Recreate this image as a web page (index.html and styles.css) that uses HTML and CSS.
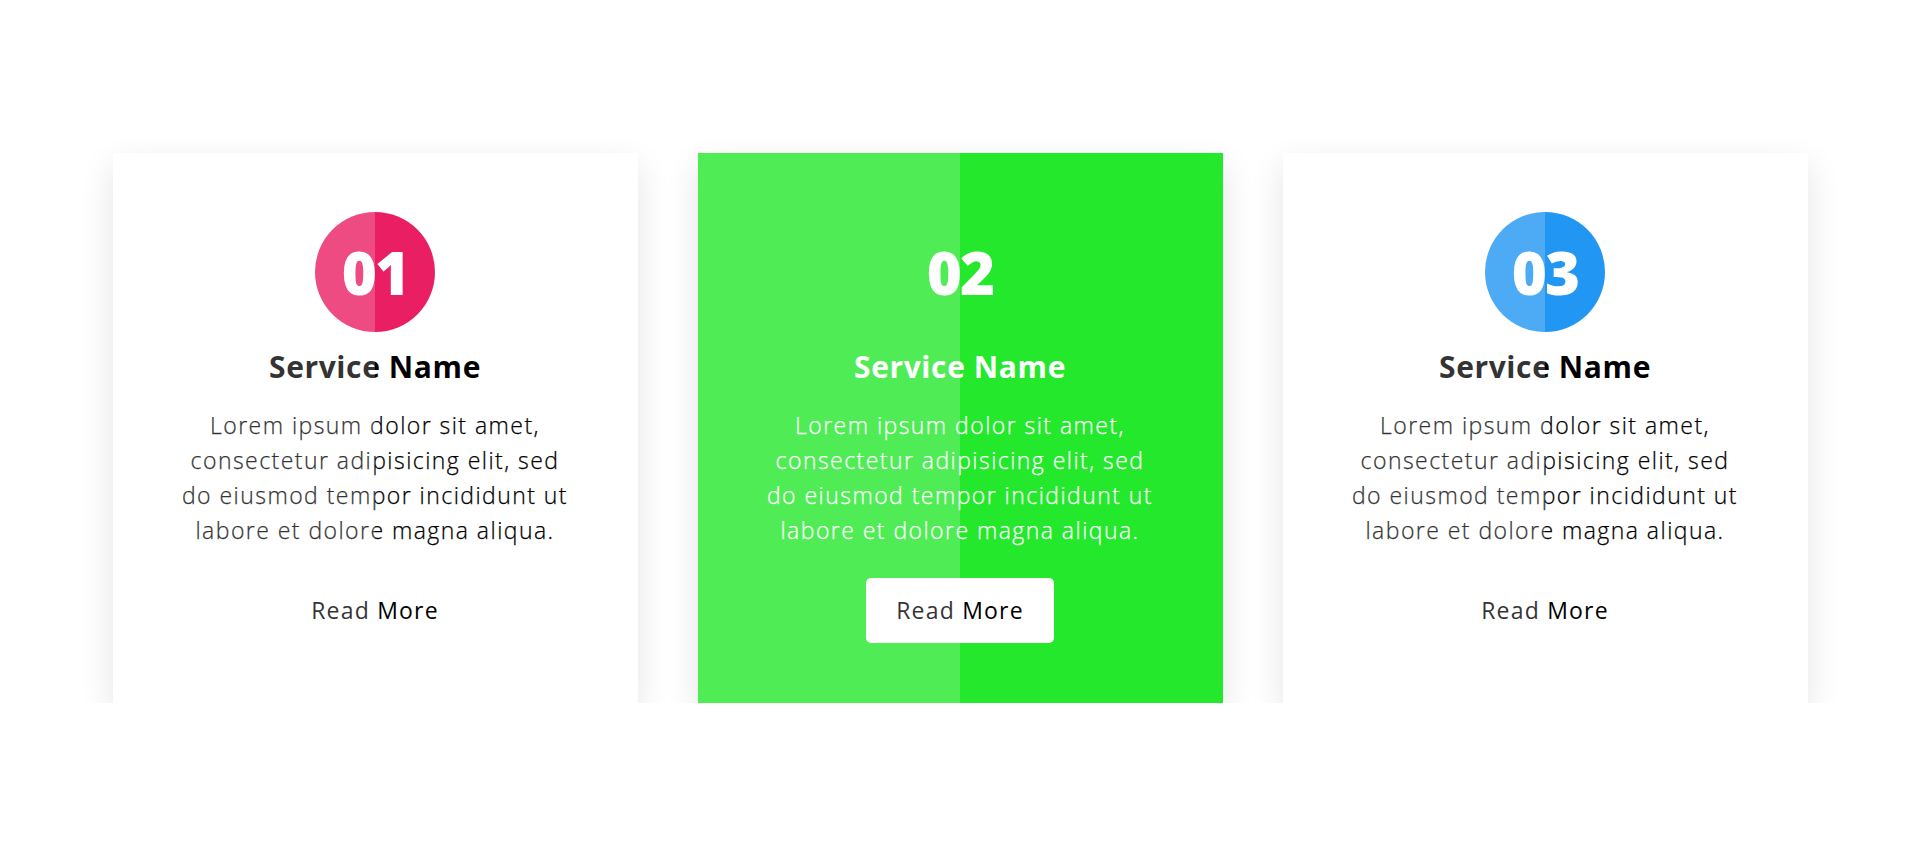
FILE: index.html
```html
<!DOCTYPE html>
<html lang="en">
<head>
<meta charset="utf-8">
<title>Services</title>
<link rel="stylesheet" href="styles.css">
</head>
<body>
<section class="services">
  <div class="card card-pink">
    <div class="num">01</div>
    <h3 class="title">Service Name</h3>
    <p class="text">Lorem ipsum dolor sit amet,<br>consectetur adipisicing elit, sed<br>do eiusmod tempor incididunt ut<br>labore et dolore magna aliqua.</p>
    <a class="more" href="#">Read More</a>
  </div>
  <div class="card card-green active">
    <div class="num">02</div>
    <h3 class="title">Service Name</h3>
    <p class="text">Lorem ipsum dolor sit amet,<br>consectetur adipisicing elit, sed<br>do eiusmod tempor incididunt ut<br>labore et dolore magna aliqua.</p>
    <a class="more" href="#">Read More</a>
  </div>
  <div class="card card-blue">
    <div class="num">03</div>
    <h3 class="title">Service Name</h3>
    <p class="text">Lorem ipsum dolor sit amet,<br>consectetur adipisicing elit, sed<br>do eiusmod tempor incididunt ut<br>labore et dolore magna aliqua.</p>
    <a class="more" href="#">Read More</a>
  </div>
</section>
</body>
</html>
```

FILE: styles.css
```css
* { box-sizing: border-box; }

html, body {
  margin: 0;
  padding: 0;
  background: #fff;
}

body {
  font-family: "Open Sans", "Noto Sans", sans-serif;
  color: #000;
}

.services {
  display: flex;
  justify-content: center;
  gap: 60px;
  padding-top: 153px;
}

.card {
  position: relative;
  width: 525px;
  height: 550px;
  padding: 59px 40px 60px;
  background: #fff;
  box-shadow: 0 12px 32px rgba(0, 0, 0, 0.11);
  display: flex;
  flex-direction: column;
  align-items: center;
  text-align: center;
}

.card::before {
  content: "";
  position: absolute;
  top: 0;
  left: 0;
  width: 50%;
  height: 100%;
  background: rgba(255, 255, 255, 0.2);
  z-index: 2;
  pointer-events: none;
}

.num {
  width: 120px;
  height: 120px;
  border-radius: 50%;
  display: flex;
  align-items: center;
  justify-content: center;
  color: #fff;
  font-size: 60px;
  font-weight: 800;
  letter-spacing: -2px;
  line-height: 1;
}

.card-pink .num { background: #e91e63; }
.card-blue .num { background: #2196f3; }
.card-green { background: #23e82b; }
.card-green .num { background: transparent; }

.title {
  margin: 15px 0 0;
  font-size: 30px;
  line-height: 40px;
  font-weight: 700;
  letter-spacing: 0.6px;
}

.text {
  margin: 21px 0 0;
  font-size: 23px;
  line-height: 35px;
  font-weight: 300;
  letter-spacing: 1.45px;
  white-space: nowrap;
  -webkit-text-stroke: 0.25px currentColor;
}

.active .title,
.active .text {
  color: #fff;
}

.more {
  margin-top: 30px;
  padding: 15px 30px;
  border-radius: 5px;
  font-size: 23px;
  line-height: 35px;
  font-weight: 400;
  letter-spacing: 1.2px;
  color: #000;
  text-decoration: none;
}

.active .more {
  background: #fff;
}
```
